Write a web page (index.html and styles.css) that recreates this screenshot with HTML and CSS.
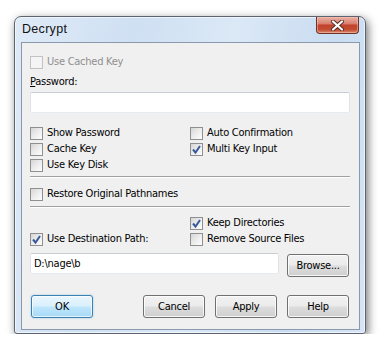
FILE: index.html
```html
<!DOCTYPE html>
<html lang="en">
<head>
    <meta charset="UTF-8">
    <title>Decrypt</title>
    <link rel="stylesheet" href="styles.css">
</head>
<body>
    <div class="window">
        <div class="titlebar">
            <span class="title">Decrypt</span>
            <div class="close">
                <svg width="17" height="11" viewBox="0 0 17 11">
                    <path d="M4 1.5 L13 9.5 M13 1.5 L4 9.5" stroke="#5a2a22" stroke-width="4" stroke-linecap="round"/>
                    <path d="M4 1.5 L13 9.5 M13 1.5 L4 9.5" stroke="#ffffff" stroke-width="2.2" stroke-linecap="round"/>
                </svg>
            </div>
        </div>

        <div class="client">
            <!-- key options -->
            <label class="check disabled"><span class="box"></span>Use Cached Key</label>
            <div class="field-label"><u>P</u>assword:</div>
            <div class="edit"></div>

            <div class="options">
                <label class="check"><span class="box"></span>Show Password</label>
                <label class="check"><span class="box"></span>Auto Confirmation</label>
                <label class="check"><span class="box"></span>Cache Key</label>
                <label class="check"><span class="box checked"><svg width="11" height="11" viewBox="0 0 11 11"><path d="M2 5.5 L4.5 8.5 L9 2" fill="none" stroke="#3a5a9c" stroke-width="2"/></svg></span>Multi Key Input</label>
                <label class="check"><span class="box"></span>Use Key Disk</label>
            </div>

            <div class="sep"></div>
            <label class="check restore"><span class="box"></span>Restore Original Pathnames</label>
            <div class="sep sep-2"></div>

            <!-- destination -->
            <div class="options dest">
                <span></span>
                <label class="check"><span class="box checked"><svg width="11" height="11" viewBox="0 0 11 11"><path d="M2 5.5 L4.5 8.5 L9 2" fill="none" stroke="#3a5a9c" stroke-width="2"/></svg></span>Keep Directories</label>
                <label class="check"><span class="box checked"><svg width="11" height="11" viewBox="0 0 11 11"><path d="M2 5.5 L4.5 8.5 L9 2" fill="none" stroke="#3a5a9c" stroke-width="2"/></svg></span>Use Destination Path:</label>
                <label class="check"><span class="box"></span>Remove Source Files</label>
            </div>

            <div class="path-row">
                <div class="edit path">D:\nage\b</div>
                <div class="btn browse">Browse...</div>
            </div>

            <div class="buttons">
                <div class="btn default">OK</div>
                <div class="btn-group">
                    <div class="btn">Cancel</div>
                    <div class="btn">Apply</div>
                    <div class="btn">Help</div>
                </div>
            </div>
        </div>
    </div>
</body>
</html>
```

FILE: styles.css
```css
body {
    margin: 0;
    padding: 16px 0 0 14px;
    background-color: #fff;
    font-family: "DejaVu Sans Condensed", "Liberation Sans", Arial, sans-serif;
    font-size: 11px;
    letter-spacing: -0.25px;
    color: #000;
}
.window {
    width: 352px;
    height: 318px;
    box-sizing: border-box;
    border: 1px solid #5b6470;
    border-radius: 7px 7px 3px 3px;
    background: linear-gradient(100deg, #dfeaf7 0%, #cfe0f3 30%, #dbe8f6 55%, #c9dcf1 80%, #d6e5f5 100%);
    box-shadow: 2px 3px 10px rgba(0, 0, 0, 0.55), inset 0 0 0 1px rgba(255, 255, 255, 0.6);
    display: flex;
    flex-direction: column;
}
.titlebar {
    height: 25px;
    display: flex;
    justify-content: space-between;
    align-items: flex-start;
    padding: 0 6px 0 7px;
}
.title {
    margin-top: 5px;
    font-family: "Liberation Sans", Arial, sans-serif;
    font-size: 12.5px;
    letter-spacing: 0.3px;
    color: #111;
}
.close {
    width: 43px;
    height: 17px;
    box-sizing: border-box;
    border: 1px solid #6e3328;
    border-top: none;
    border-radius: 0 0 4px 4px;
    background: linear-gradient(#eab0a3 0%, #d98472 40%, #c2432d 52%, #c44c33 78%, #d98a6c 100%);
    box-shadow: inset 0 0 0 1px rgba(255, 200, 190, 0.5);
    display: flex;
    align-items: center;
    justify-content: center;
}
.client {
    width: 339px;
    height: 288px;
    margin-left: 6px;
    box-sizing: border-box;
    border: 1px solid #8a99ad;
    background-color: #f0f0f0;
    padding: 11px 9px 0 8px;
    display: flex;
    flex-direction: column;
}
.check {
    display: flex;
    align-items: center;
    height: 16px;
    line-height: 16px;
    white-space: nowrap;
}
.box {
    width: 13px;
    height: 13px;
    box-sizing: border-box;
    border: 1px solid #8e8f8f;
    background: linear-gradient(135deg, #d6d6d6 0%, #ececec 50%, #fdfdfd 100%);
    margin-right: 4px;
    display: flex;
    align-items: center;
    justify-content: center;
    flex: none;
}
.disabled {
    color: #8f8f8f;
}
.disabled .box {
    border-color: #c2c2c2;
    background: #f4f4f4;
}
.field-label {
    margin-top: 5px;
    height: 14px;
    line-height: 14px;
}
.edit {
    margin-top: 3px;
    height: 21px;
    box-sizing: border-box;
    background-color: #fff;
    border: 1px solid;
    border-color: #c9ced6 #dfe3e9 #e6ebf0 #dfe3e9;
    border-radius: 2px;
}
.options {
    margin-top: 12px;
    display: grid;
    grid-template-columns: 160px 1fr;
    grid-auto-rows: 16px;
}
.sep {
    margin-top: 3px;
    border-top: 1px solid #a0a0a0;
    border-bottom: 1px solid #fff;
}
.restore {
    margin-top: 8px;
}
.sep-2 {
    margin-top: 4px;
}
.dest {
    margin-top: 7px;
}
.path-row {
    margin-top: 6px;
    display: flex;
    align-items: flex-start;
    gap: 8px;
}
.edit.path {
    margin-top: 0;
    width: 249px;
    height: 21px;
    line-height: 19px;
    padding-left: 3px;
}
.btn {
    width: 62px;
    height: 23px;
    box-sizing: border-box;
    border: 1px solid #707070;
    border-radius: 3px;
    background: linear-gradient(#f2f2f2 0%, #ebebeb 48%, #dddddd 52%, #cfcfcf 100%);
    box-shadow: inset 0 0 0 1px rgba(255, 255, 255, 0.8);
    text-align: center;
    line-height: 21px;
}
.browse {
    margin-top: 1px;
}
.buttons {
    margin-top: 18px;
    display: flex;
    justify-content: space-between;
    padding: 0 1px 0 1px;
}
.btn-group {
    display: flex;
    gap: 10px;
}
.btn.default {
    border-color: #3c7fb1;
    background: linear-gradient(#eaf6fd 0%, #d9f0fc 48%, #bee6fd 52%, #a7d9f5 100%);
    box-shadow: inset 0 0 0 1px rgba(255, 255, 255, 0.7), 0 0 2px rgba(60, 160, 220, 0.5);
}
```
